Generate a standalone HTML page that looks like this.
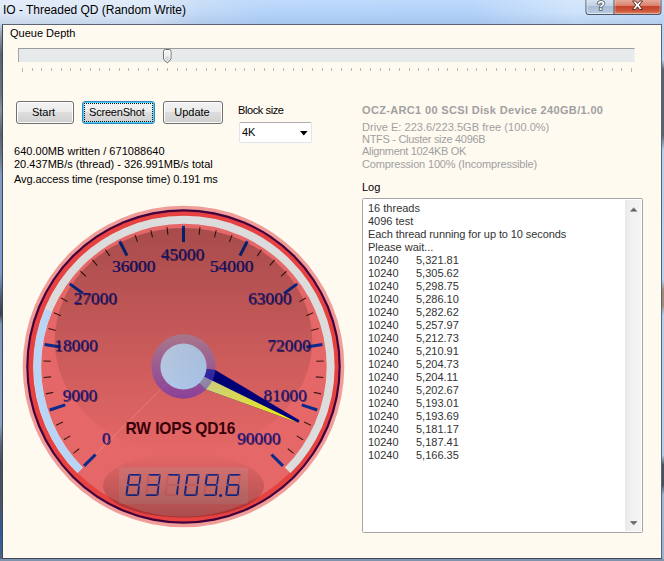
<!DOCTYPE html>
<html><head><meta charset="utf-8"><title>IO - Threaded QD (Random Write)</title>
<style>
html,body{margin:0;padding:0}
body{width:664px;height:561px;position:relative;overflow:hidden;background:#b9d1ee;font-family:"Liberation Sans",sans-serif;font-size:11px;color:#000}
.abs,#win *{position:absolute}
#win{position:absolute;left:0;top:0;width:664px;height:561px;overflow:hidden}
#tb{left:0;top:0;width:664px;height:24px;background:linear-gradient(90deg,#dfe9f7 0,#dbe7f8 150px,#c2d9f6 200px,#b5d4fa 260px,#b2d2f9 470px,#cfe3fb 575px,#c4dcf8 664px)}
#tbsh{left:0;top:0;width:664px;height:24px;background:linear-gradient(180deg,rgba(255,255,255,.15) 0,rgba(255,255,255,0) 12px,rgba(120,150,190,.22) 24px)}
#title{left:3px;top:2px;font-size:12px;line-height:16px;white-space:pre;color:#000;letter-spacing:-0.02px}
#lf{left:0;top:24px;width:2px;height:537px;background:linear-gradient(180deg,#bcd2ee 0,#8e98a8 12px,#5c646e 30px,#6a727c 70px,#8a929c 85px,#5a626c 110px,#6e7c92 136px,#7f9cc6 150px,#7b9bcc 250px,#50607a 272px,#3c4048 290px,#7f97b8 300px,#8aa2c4 400px,#5a6678 420px,#464e5c 440px,#4c5464 480px,#2c5c98 505px,#34609a 520px,#56627a 537px)}
#rf{left:662px;top:15px;width:2px;height:546px;background:linear-gradient(180deg,#bcd4f4 0,#bcd4f4 45px,#5a626c 55px,#5a626c 120px,#b4cef0 135px,#b8d2f4 265px,#a08a78 275px,#a08a78 290px,#b4cef0 300px,#b4cef0 440px,#4a5260 450px,#4a5260 470px,#a0b8d8 480px,#9cb4d4 546px)}
#bf{left:0;top:559px;width:664px;height:2px;background:#7f93ad}
#client{left:2px;top:24px;width:658px;height:533px;border:1px solid #3f4854;border-top-color:#5a6474;border-right-color:#5a6472;background:#fffaf0}
.t{white-space:pre;line-height:13px;height:13px}
.gray{color:#a0a0a0}
#track{left:18px;top:48px;width:615px;height:13px;background:#e7eaea;border-top:1px solid #9b9b9b;border-left:1px solid #a5a5a5;border-right:1px solid #f0f0f0}
#ticks i{position:absolute;top:68px;width:1px;height:3px;background:#b6b6c0}
#thumb{left:163px;top:49px;width:9px;height:15px}
.btn{height:21px;border:1px solid #707070;border-radius:3px;background:linear-gradient(180deg,#f2f2f2 0,#ebebeb 49%,#dddddd 50%,#cfcfcf 100%);box-shadow:inset 0 0 0 1px rgba(255,255,255,.9);text-align:center;line-height:21px;white-space:pre}
#combo{left:239px;top:122px;width:71px;height:19px;background:#fff;border:1px solid #e3e4ea;border-top-color:#abadb3;border-radius:2px}
#log{left:362px;top:198px;width:279px;height:333px;background:#fff;border:1px solid #a5a5a5;border-radius:1.5px;color:#333}
#logtxt{left:5px;top:3px;line-height:13px;white-space:pre}
#logtxt div{position:static;height:13px}
#logtxt span{position:static;display:inline-block;width:48px}
#sb{left:262px;top:1px;width:16px;height:331px;background:linear-gradient(90deg,#e9e9e9 0,#f1f1f1 40%,#f4f4f4 100%)}
.lb{font-family:"Liberation Serif",serif;font-size:17.4px}
.dt{font-family:"Liberation Sans",sans-serif;font-weight:bold;font-size:15.5px;letter-spacing:-0.15px}
#gauge{left:10px;top:200px}
</style></head><body>
<div id="win">
<div id="tb"></div><div id="tbsh"></div>
<div id="title">IO - Threaded QD (Random Write)</div>
<svg class="abs" style="left:585px;top:0" width="78" height="16" viewBox="0 0 78 16">
<defs>
<linearGradient id="hb" x1="0" y1="0" x2="0" y2="1"><stop offset="0" stop-color="#d8e4f2"/><stop offset=".45" stop-color="#c3d2e4"/><stop offset=".5" stop-color="#a9bdd6"/><stop offset="1" stop-color="#b9cbe0"/></linearGradient>
<linearGradient id="cb" x1="0" y1="0" x2="0" y2="1"><stop offset="0" stop-color="#e9b0a2"/><stop offset=".45" stop-color="#d9806c"/><stop offset=".5" stop-color="#c4432a"/><stop offset=".8" stop-color="#cf563a"/><stop offset="1" stop-color="#dc8a6a"/></linearGradient>
</defs>
<path d="M0.5 -1V11.5Q0.5 15 4 15H73Q76.5 15 76.5 11.5V-1Z" fill="#4a5668"/>
<path d="M1.5 -1V11.5Q1.5 14 4 14H28.5V-1Z" fill="url(#hb)"/>
<path d="M29.5 -1V14H73Q75.5 14 75.5 11.5V-1Z" fill="url(#cb)"/>
<path d="M2 0V11.5Q2 13.5 4 13.5H28" fill="none" stroke="#fff" stroke-opacity=".55"/>
<path d="M30 0V13.5H73Q75 13.5 75 11.5V0" fill="none" stroke="#fff" stroke-opacity=".35"/>
<text x="16" y="9.8" text-anchor="middle" font-family="Liberation Sans,sans-serif" font-weight="bold" font-size="13" fill="#fff" stroke="#4a5668" stroke-width="1.6" paint-order="stroke">?</text>
<path d="M47.5 1L50.5 1L52.5 3.5L54.5 1L57.5 1L54.3 5L57.5 9.5L54.5 9.5L52.5 6.8L50.5 9.5L47.5 9.5L50.7 5Z" fill="#fff" stroke="#5a3030" stroke-width="1" stroke-linejoin="round"/>
</svg>
<div id="lf"></div><div id="rf"></div><div id="bf"></div>
<div id="client"></div>

<div class="t" style="left:10px;top:27px">Queue Depth</div>
<div id="track"></div>
<div id="ticks"><i style="left:22px;height:4px"></i><i style="left:32px"></i><i style="left:41px"></i><i style="left:51px"></i><i style="left:61px"></i><i style="left:70px"></i><i style="left:80px"></i><i style="left:90px"></i><i style="left:99px"></i><i style="left:109px"></i><i style="left:119px"></i><i style="left:128px"></i><i style="left:138px"></i><i style="left:148px"></i><i style="left:157px"></i><i style="left:167px"></i><i style="left:177px"></i><i style="left:186px"></i><i style="left:196px"></i><i style="left:206px"></i><i style="left:215px"></i><i style="left:225px"></i><i style="left:235px"></i><i style="left:244px"></i><i style="left:254px"></i><i style="left:264px"></i><i style="left:273px"></i><i style="left:283px"></i><i style="left:293px"></i><i style="left:302px"></i><i style="left:312px"></i><i style="left:322px"></i><i style="left:331px"></i><i style="left:341px"></i><i style="left:351px"></i><i style="left:360px"></i><i style="left:370px"></i><i style="left:380px"></i><i style="left:389px"></i><i style="left:399px"></i><i style="left:409px"></i><i style="left:418px"></i><i style="left:428px"></i><i style="left:438px"></i><i style="left:447px"></i><i style="left:457px"></i><i style="left:467px"></i><i style="left:476px"></i><i style="left:486px"></i><i style="left:496px"></i><i style="left:505px"></i><i style="left:515px"></i><i style="left:525px"></i><i style="left:534px"></i><i style="left:544px"></i><i style="left:554px"></i><i style="left:563px"></i><i style="left:573px"></i><i style="left:583px"></i><i style="left:592px"></i><i style="left:602px"></i><i style="left:612px"></i><i style="left:621px"></i><i style="left:631px;height:4px"></i></div>
<svg id="thumb" viewBox="0 0 9 15"><defs><linearGradient id="tg" x1="0" y1="0" x2="0" y2="1"><stop offset="0" stop-color="#f4f4f4"/><stop offset=".5" stop-color="#ececec"/><stop offset=".55" stop-color="#dcdcdc"/><stop offset="1" stop-color="#d0d0d0"/></linearGradient></defs>
<path d="M0.5 2.5Q0.5 0.5 2.5 0.5H6Q8 0.5 8 2.5V9.8Q7.6 11.2 4.25 13.8Q0.9 11.2 0.5 9.8Z" fill="url(#tg)" stroke="#6e6e6e" stroke-width="1"/>
<path d="M1.5 2.5Q1.5 1.5 2.5 1.5H6Q7 1.5 7 2.5V9.5Q6.6 10.6 4.25 12.5Q1.9 10.6 1.5 9.5Z" fill="none" stroke="#fff" stroke-opacity=".7" stroke-width="1"/></svg>

<div class="btn" style="left:16px;top:101px;width:56px;text-indent:-3px">Start</div>
<div class="btn" style="left:82px;top:101px;width:71px;border-color:#3584c4;box-shadow:inset 0 0 0 1px #45d2f8;text-indent:-3.5px;letter-spacing:-0.2px">ScreenShot</div>
<div class="abs" style="left:84px;top:103px;width:67px;height:17px;border:1px dotted #111"></div>
<div class="btn" style="left:163px;top:101px;width:58px;text-indent:-2px">Update</div>
<div class="t" style="left:238px;top:104px;letter-spacing:-0.4px">Block size</div>
<div id="combo"><div class="t" style="left:2px;top:3px">4K</div>
<svg class="abs" style="left:60px;top:8px" width="8" height="5" viewBox="0 0 8 5"><path d="M0 0H7.6L3.8 4.4Z" fill="#000"/></svg></div>

<div class="t" style="left:14px;top:145px;letter-spacing:0.03px">640.00MB written / 671088640</div>
<div class="t" style="left:14px;top:158px">20.437MB/s (thread) - 326.991MB/s total</div>
<div class="t" style="left:14px;top:173px;letter-spacing:-0.1px">Avg.access time (response time) 0.191 ms</div>

<div class="t gray" style="left:362px;top:104px;font-weight:bold;letter-spacing:0.34px">OCZ-ARC1 00 SCSI Disk Device 240GB/1.00</div>
<div class="t gray" style="left:362px;top:121px;letter-spacing:0.04px">Drive E: 223.6/223.5GB free (100.0%)</div>
<div class="t gray" style="left:362px;top:133px;letter-spacing:-0.3px">NTFS - Cluster size 4096B</div>
<div class="t gray" style="left:362px;top:145px;letter-spacing:-0.32px">Alignment 1024KB OK</div>
<div class="t gray" style="left:362px;top:158px;letter-spacing:-0.16px">Compression 100% (Incompressible)</div>
<div class="t" style="left:362px;top:181px">Log</div>
<div id="log"><div id="logtxt"><div>16 threads</div><div>4096 test</div><div style="letter-spacing:-0.09px">Each thread running for up to 10 seconds</div><div>Please wait...</div><div><span class="c1">10240</span>5,321.81</div><div><span class="c1">10240</span>5,305.62</div><div><span class="c1">10240</span>5,298.75</div><div><span class="c1">10240</span>5,286.10</div><div><span class="c1">10240</span>5,282.62</div><div><span class="c1">10240</span>5,257.97</div><div><span class="c1">10240</span>5,212.73</div><div><span class="c1">10240</span>5,210.91</div><div><span class="c1">10240</span>5,204.73</div><div><span class="c1">10240</span>5,204.11</div><div><span class="c1">10240</span>5,202.67</div><div><span class="c1">10240</span>5,193.01</div><div><span class="c1">10240</span>5,193.69</div><div><span class="c1">10240</span>5,181.17</div><div><span class="c1">10240</span>5,187.41</div><div><span class="c1">10240</span>5,166.35</div></div>
<div id="sb"></div>
<svg class="abs" style="left:267px;top:8px" width="8" height="5" viewBox="0 0 8 5"><defs><linearGradient id="ag" x1="0" y1="0" x2="0" y2="1"><stop offset="0" stop-color="#8a8a8a"/><stop offset="1" stop-color="#555"/></linearGradient><linearGradient id="ag2" x1="0" y1="0" x2="0" y2="1"><stop offset="0" stop-color="#505050"/><stop offset="1" stop-color="#a0a0a0"/></linearGradient></defs><path d="M0 4.5L3.7 0.3L7.4 4.5Z" fill="url(#ag)"/></svg>
<svg class="abs" style="left:267px;top:322px" width="8" height="5" viewBox="0 0 8 5"><path d="M0 0.3L3.7 4.5L7.4 0.3Z" fill="url(#ag2)"/></svg>
</div>
<svg id="gauge" width="340" height="340" viewBox="10 200 340 340">
<defs>
<linearGradient id="gl" x1="0" y1="0" x2="0" y2="1"><stop offset="0" stop-color="#000" stop-opacity="0.27"/><stop offset="1" stop-color="#000" stop-opacity="0"/></linearGradient>
<linearGradient id="gb" x1="0" y1="0" x2="0" y2="1"><stop offset="0" stop-color="#000" stop-opacity="0"/><stop offset="1" stop-color="#000" stop-opacity="0.26"/></linearGradient>
<linearGradient id="hubo" x1="0" y1="0" x2="0" y2="1"><stop offset="0" stop-color="rgb(161,172,218)"/><stop offset="1" stop-color="rgb(69,32,224)"/></linearGradient>
<linearGradient id="hubi" x1="0" y1="0" x2="1" y2="1"><stop offset="0" stop-color="rgb(209,226,250)"/><stop offset="1" stop-color="rgb(178,208,250)"/></linearGradient>
</defs>
<circle cx="183.5" cy="366.5" r="160.8" fill="#f09c98"/>
<circle cx="183.5" cy="366.5" r="157.25" fill="#40003c"/>
<circle cx="183.5" cy="366.5" r="155.1" fill="#e64242"/>
<circle cx="183.5" cy="366.5" r="150.3" fill="#e66767"/>
<path d="M80.13 470.27A146.75 146.75 0 1 1 287.67 470.27" fill="none" stroke="#dcdcdc" stroke-width="8"/>
<path d="M80.24 470.16A146.6 146.6 0 0 1 48.46 310.40" fill="none" stroke="#b8d4f6" stroke-width="7"/>
<line x1="84.08" y1="465.92" x2="95.54" y2="454.46" stroke="#0a2a8c" stroke-width="3"/>
<line x1="73.32" y1="453.36" x2="79.21" y2="448.72" stroke="#3a1814" stroke-width="1.1"/>
<line x1="63.87" y1="439.81" x2="70.27" y2="435.89" stroke="#3a1814" stroke-width="1.1"/>
<line x1="56.09" y1="425.24" x2="62.90" y2="422.10" stroke="#3a1814" stroke-width="1.1"/>
<line x1="49.78" y1="409.95" x2="65.19" y2="404.94" stroke="#0a2a8c" stroke-width="3"/>
<line x1="45.90" y1="393.87" x2="53.25" y2="392.41" stroke="#3a1814" stroke-width="1.1"/>
<line x1="43.63" y1="377.51" x2="51.11" y2="376.92" stroke="#3a1814" stroke-width="1.1"/>
<line x1="43.31" y1="360.99" x2="50.80" y2="361.29" stroke="#3a1814" stroke-width="1.1"/>
<line x1="44.63" y1="344.51" x2="60.63" y2="347.04" stroke="#0a2a8c" stroke-width="3"/>
<line x1="48.47" y1="328.42" x2="55.69" y2="330.45" stroke="#3a1814" stroke-width="1.1"/>
<line x1="53.88" y1="312.81" x2="60.81" y2="315.68" stroke="#3a1814" stroke-width="1.1"/>
<line x1="61.09" y1="297.95" x2="67.63" y2="301.61" stroke="#3a1814" stroke-width="1.1"/>
<line x1="69.75" y1="283.86" x2="82.86" y2="293.38" stroke="#0a2a8c" stroke-width="3"/>
<line x1="80.47" y1="271.26" x2="85.98" y2="276.36" stroke="#3a1814" stroke-width="1.1"/>
<line x1="92.38" y1="259.82" x2="97.25" y2="265.52" stroke="#3a1814" stroke-width="1.1"/>
<line x1="105.55" y1="249.84" x2="109.72" y2="256.08" stroke="#3a1814" stroke-width="1.1"/>
<line x1="119.67" y1="241.22" x2="127.02" y2="255.66" stroke="#0a2a8c" stroke-width="3"/>
<line x1="134.94" y1="234.87" x2="137.54" y2="241.91" stroke="#3a1814" stroke-width="1.1"/>
<line x1="150.75" y1="230.08" x2="152.50" y2="237.37" stroke="#3a1814" stroke-width="1.1"/>
<line x1="167.01" y1="227.17" x2="167.89" y2="234.62" stroke="#3a1814" stroke-width="1.1"/>
<line x1="183.50" y1="225.90" x2="183.50" y2="242.10" stroke="#0a2a8c" stroke-width="3"/>
<line x1="199.99" y1="227.17" x2="199.11" y2="234.62" stroke="#3a1814" stroke-width="1.1"/>
<line x1="216.25" y1="230.08" x2="214.50" y2="237.37" stroke="#3a1814" stroke-width="1.1"/>
<line x1="232.06" y1="234.87" x2="229.46" y2="241.91" stroke="#3a1814" stroke-width="1.1"/>
<line x1="247.33" y1="241.22" x2="239.98" y2="255.66" stroke="#0a2a8c" stroke-width="3"/>
<line x1="261.45" y1="249.84" x2="257.28" y2="256.08" stroke="#3a1814" stroke-width="1.1"/>
<line x1="274.62" y1="259.82" x2="269.75" y2="265.52" stroke="#3a1814" stroke-width="1.1"/>
<line x1="286.53" y1="271.26" x2="281.02" y2="276.36" stroke="#3a1814" stroke-width="1.1"/>
<line x1="297.25" y1="283.86" x2="284.14" y2="293.38" stroke="#0a2a8c" stroke-width="3"/>
<line x1="305.91" y1="297.95" x2="299.37" y2="301.61" stroke="#3a1814" stroke-width="1.1"/>
<line x1="313.12" y1="312.81" x2="306.19" y2="315.68" stroke="#3a1814" stroke-width="1.1"/>
<line x1="318.53" y1="328.42" x2="311.31" y2="330.45" stroke="#3a1814" stroke-width="1.1"/>
<line x1="322.37" y1="344.51" x2="306.37" y2="347.04" stroke="#0a2a8c" stroke-width="3"/>
<line x1="323.69" y1="360.99" x2="316.20" y2="361.29" stroke="#3a1814" stroke-width="1.1"/>
<line x1="323.37" y1="377.51" x2="315.89" y2="376.92" stroke="#3a1814" stroke-width="1.1"/>
<line x1="321.10" y1="393.87" x2="313.75" y2="392.41" stroke="#3a1814" stroke-width="1.1"/>
<line x1="317.22" y1="409.95" x2="301.81" y2="404.94" stroke="#0a2a8c" stroke-width="3"/>
<line x1="310.91" y1="425.24" x2="304.10" y2="422.10" stroke="#3a1814" stroke-width="1.1"/>
<line x1="303.13" y1="439.81" x2="296.73" y2="435.89" stroke="#3a1814" stroke-width="1.1"/>
<line x1="293.68" y1="453.36" x2="287.79" y2="448.72" stroke="#3a1814" stroke-width="1.1"/>
<line x1="282.92" y1="465.92" x2="271.46" y2="454.46" stroke="#0a2a8c" stroke-width="3"/>
<text x="106.94" y="444.81" text-anchor="middle" class="lb" fill="#3a0c30" fill-opacity="0.75">0</text>
<text x="106.14" y="444.01" text-anchor="middle" class="lb" fill="#1a1a88">0</text>
<text x="80.63" y="401.88" text-anchor="middle" class="lb" fill="#3a0c30" fill-opacity="0.75">9000</text>
<text x="79.83" y="401.08" text-anchor="middle" class="lb" fill="#1a1a88">9000</text>
<text x="76.68" y="351.68" text-anchor="middle" class="lb" fill="#3a0c30" fill-opacity="0.75">18000</text>
<text x="75.88" y="350.88" text-anchor="middle" class="lb" fill="#1a1a88">18000</text>
<text x="95.95" y="305.16" text-anchor="middle" class="lb" fill="#3a0c30" fill-opacity="0.75">27000</text>
<text x="95.15" y="304.36" text-anchor="middle" class="lb" fill="#1a1a88">27000</text>
<text x="134.24" y="272.45" text-anchor="middle" class="lb" fill="#3a0c30" fill-opacity="0.75">36000</text>
<text x="133.44" y="271.65" text-anchor="middle" class="lb" fill="#1a1a88">36000</text>
<text x="183.20" y="260.70" text-anchor="middle" class="lb" fill="#3a0c30" fill-opacity="0.75">45000</text>
<text x="182.40" y="259.90" text-anchor="middle" class="lb" fill="#1a1a88">45000</text>
<text x="232.16" y="272.45" text-anchor="middle" class="lb" fill="#3a0c30" fill-opacity="0.75">54000</text>
<text x="231.36" y="271.65" text-anchor="middle" class="lb" fill="#1a1a88">54000</text>
<text x="270.45" y="305.16" text-anchor="middle" class="lb" fill="#3a0c30" fill-opacity="0.75">63000</text>
<text x="269.65" y="304.36" text-anchor="middle" class="lb" fill="#1a1a88">63000</text>
<text x="289.72" y="351.68" text-anchor="middle" class="lb" fill="#3a0c30" fill-opacity="0.75">72000</text>
<text x="288.92" y="350.88" text-anchor="middle" class="lb" fill="#1a1a88">72000</text>
<text x="285.77" y="401.88" text-anchor="middle" class="lb" fill="#3a0c30" fill-opacity="0.75">81000</text>
<text x="284.97" y="401.08" text-anchor="middle" class="lb" fill="#1a1a88">81000</text>
<text x="259.46" y="444.81" text-anchor="middle" class="lb" fill="#3a0c30" fill-opacity="0.75">90000</text>
<text x="258.66" y="444.01" text-anchor="middle" class="lb" fill="#1a1a88">90000</text>
<rect x="119" y="467.5" width="129" height="36.5" fill="#b9b9b9" fill-opacity="0.2"/>
<polygon points="128.64,473.93 141.33,473.93 139.21,475.77 130.40,475.77" fill="#1a2a8c"/><polygon points="141.33,474.67 140.09,484.57 138.51,483.83 139.57,476.13" fill="#1a2a8c"/><polygon points="139.92,485.30 139.04,495.38 137.10,493.92 138.16,486.22" fill="#1a2a8c"/><polygon points="136.74,494.28 138.51,495.93 125.99,495.93 127.58,494.28" fill="#1a2a8c"/><polygon points="127.58,493.73 125.46,495.38 126.70,485.30 128.64,486.22" fill="#1a2a8c"/><polygon points="128.99,483.83 126.87,484.57 128.28,474.48 130.05,476.13" fill="#1a2a8c"/><polygon points="127.23,484.93 129.16,484.02 138.33,484.02 139.57,484.93 138.16,485.85 128.81,485.85" fill="#1a2a8c"/>
<polygon points="148.08,473.93 160.77,473.93 158.65,475.77 149.84,475.77" fill="#1a2a8c"/><polygon points="160.77,474.67 159.53,484.57 157.95,483.83 159.01,476.13" fill="#1a2a8c"/><polygon points="159.36,485.30 158.48,495.38 156.54,493.92 157.60,486.22" fill="#1a2a8c"/><polygon points="156.18,494.28 157.95,495.93 145.43,495.93 147.02,494.28" fill="#1a2a8c"/><polygon points="147.02,493.73 144.90,495.38 146.14,485.30 148.08,486.22" fill="#e04848" fill-opacity="0.32"/><polygon points="148.43,483.83 146.31,484.57 147.72,474.48 149.49,476.13" fill="#e04848" fill-opacity="0.32"/><polygon points="146.67,484.93 148.60,484.02 157.77,484.02 159.01,484.93 157.60,485.85 148.25,485.85" fill="#1a2a8c"/>
<polygon points="167.52,473.93 180.21,473.93 178.09,475.77 169.28,475.77" fill="#1a2a8c"/><polygon points="180.21,474.67 178.97,484.57 177.39,483.83 178.45,476.13" fill="#1a2a8c"/><polygon points="178.80,485.30 177.92,495.38 175.98,493.92 177.04,486.22" fill="#1a2a8c"/><polygon points="175.62,494.28 177.39,495.93 164.87,495.93 166.46,494.28" fill="#e04848" fill-opacity="0.32"/><polygon points="166.46,493.73 164.34,495.38 165.58,485.30 167.52,486.22" fill="#e04848" fill-opacity="0.32"/><polygon points="167.87,483.83 165.75,484.57 167.16,474.48 168.93,476.13" fill="#e04848" fill-opacity="0.32"/><polygon points="166.11,484.93 168.04,484.02 177.21,484.02 178.45,484.93 177.04,485.85 167.69,485.85" fill="#e04848" fill-opacity="0.32"/>
<polygon points="186.96,473.93 199.65,473.93 197.53,475.77 188.72,475.77" fill="#1a2a8c"/><polygon points="199.65,474.67 198.41,484.57 196.83,483.83 197.89,476.13" fill="#1a2a8c"/><polygon points="198.24,485.30 197.36,495.38 195.42,493.92 196.48,486.22" fill="#1a2a8c"/><polygon points="195.06,494.28 196.83,495.93 184.31,495.93 185.90,494.28" fill="#1a2a8c"/><polygon points="185.90,493.73 183.78,495.38 185.02,485.30 186.96,486.22" fill="#1a2a8c"/><polygon points="187.31,483.83 185.19,484.57 186.60,474.48 188.37,476.13" fill="#1a2a8c"/><polygon points="185.55,484.93 187.48,484.02 196.65,484.02 197.89,484.93 196.48,485.85 187.13,485.85" fill="#e04848" fill-opacity="0.32"/>
<polygon points="206.40,473.93 219.09,473.93 216.97,475.77 208.16,475.77" fill="#1a2a8c"/><polygon points="219.09,474.67 217.85,484.57 216.27,483.83 217.33,476.13" fill="#1a2a8c"/><polygon points="217.68,485.30 216.80,495.38 214.86,493.92 215.92,486.22" fill="#1a2a8c"/><polygon points="214.50,494.28 216.27,495.93 203.75,495.93 205.34,494.28" fill="#1a2a8c"/><polygon points="205.34,493.73 203.22,495.38 204.46,485.30 206.40,486.22" fill="#e04848" fill-opacity="0.32"/><polygon points="206.75,483.83 204.63,484.57 206.04,474.48 207.81,476.13" fill="#1a2a8c"/><polygon points="204.99,484.93 206.92,484.02 216.09,484.02 217.33,484.93 215.92,485.85 206.57,485.85" fill="#1a2a8c"/><ellipse cx="220.60" cy="495.61" rx="1.51" ry="1.51" fill="#1a2a8c"/>
<polygon points="228.34,473.93 241.03,473.93 238.91,475.77 230.10,475.77" fill="#1a2a8c"/><polygon points="241.03,474.67 239.79,484.57 238.21,483.83 239.27,476.13" fill="#e04848" fill-opacity="0.32"/><polygon points="239.62,485.30 238.74,495.38 236.80,493.92 237.86,486.22" fill="#1a2a8c"/><polygon points="236.44,494.28 238.21,495.93 225.69,495.93 227.28,494.28" fill="#1a2a8c"/><polygon points="227.28,493.73 225.16,495.38 226.40,485.30 228.34,486.22" fill="#1a2a8c"/><polygon points="228.69,483.83 226.57,484.57 227.98,474.48 229.75,476.13" fill="#1a2a8c"/><polygon points="226.93,484.93 228.86,484.02 238.03,484.02 239.27,484.93 237.86,485.85 228.51,485.85" fill="#1a2a8c"/>
<g transform="translate(0,434.3) scale(1,1.06)" fill="#3a0008"><text x="125.6" y="0" class="dt">RW</text><text x="155.2" y="0" class="dt">IOPS</text><text x="195.3" y="0" class="dt">QD16</text></g>
<line x1="183.5" y1="366.5" x2="95.82" y2="454.18" stroke="#f4c0a0" stroke-opacity="0.33" stroke-width="1"/>
<polygon points="298.33,422.83 205.33,389.21 183.5,366.5 214.82,369.86 299.54,420.29" fill="#000080"/>
<linearGradient id="ng" gradientUnits="userSpaceOnUse" x1="298.33" y1="422.83" x2="183.5" y2="366.5"><stop offset="0" stop-color="#f8f800"/><stop offset="1" stop-color="#d8d8b0"/></linearGradient>
<polygon points="298.33,422.83 205.33,389.21 183.5,366.5" fill="url(#ng)"/>
<circle cx="183.5" cy="366.5" r="32.2" fill="url(#hubo)" fill-opacity="0.5"/>
<circle cx="183.5" cy="366.5" r="23.1" fill="url(#hubi)"/>
<ellipse cx="183.5" cy="340.7" rx="128.8" ry="112.7" fill="url(#gl)"/>
<ellipse cx="183.5" cy="485.6" rx="80.5" ry="32.2" fill="url(#gb)"/>
</svg>
</div>
</body></html>
